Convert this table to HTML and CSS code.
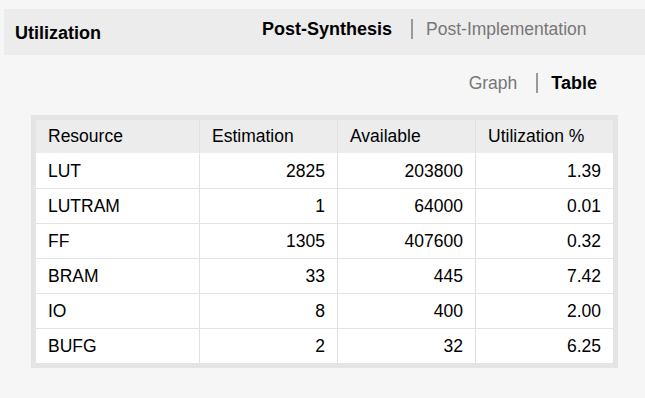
FILE: index.html
```html
<!DOCTYPE html>
<html>
<head>
<meta charset="utf-8">
<link rel="stylesheet" href="styles.css">
</head>
<body>
<div class="panel">
  <div class="header">
    <div class="title">Utilization</div>
    <div class="tabs">
      <span class="tab active">Post-Synthesis</span>
      <span class="sep sep-top"></span>
      <span class="tab">Post-Implementation</span>
    </div>
  </div>
  <div class="content">
    <div class="toggle">
      <span class="tab">Graph</span>
      <span class="sep sep-toggle"></span>
      <span class="tab active">Table</span>
    </div>
    <div class="frame">
      <table class="util">
        <colgroup>
          <col class="c1"><col class="c2"><col class="c3"><col class="c4">
        </colgroup>
        <thead>
          <tr><th>Resource</th><th>Estimation</th><th>Available</th><th>Utilization %</th></tr>
        </thead>
        <tbody>
          <tr><td>LUT</td><td class="num">2825</td><td class="num">203800</td><td class="num">1.39</td></tr>
          <tr><td>LUTRAM</td><td class="num">1</td><td class="num">64000</td><td class="num">0.01</td></tr>
          <tr><td>FF</td><td class="num">1305</td><td class="num">407600</td><td class="num">0.32</td></tr>
          <tr><td>BRAM</td><td class="num">33</td><td class="num">445</td><td class="num">7.42</td></tr>
          <tr><td>IO</td><td class="num">8</td><td class="num">400</td><td class="num">2.00</td></tr>
          <tr><td>BUFG</td><td class="num">2</td><td class="num">32</td><td class="num">6.25</td></tr>
        </tbody>
      </table>
    </div>
  </div>
</div>
</body>
</html>
```
FILE: styles.css
```css
html, body {
  margin: 0;
  padding: 0;
  background: #f6f6f6;
  font-family: "Liberation Sans", Arial, sans-serif;
  font-size: 17.5px;
  color: #000;
}

.panel {
  padding: 9px 0 0 4px;
}

.header {
  background: #ececec;
  height: 46px;
  display: flex;
  align-items: flex-start;
}

.title {
  font-weight: bold;
  font-size: 18px;
  line-height: 20px;
  padding: 14px 0 0 11px;
  width: 247px;
}

.tabs {
  display: flex;
  align-items: center;
  padding-top: 10px;
  line-height: 20px;
}

.tab {
  color: #777;
  line-height: 20px;
}

.tab.active {
  color: #000;
  font-weight: bold;
  font-size: 18px;
}

.sep {
  display: inline-block;
  width: 2px;
  height: 20px;
  background: #999;
}

.sep-top {
  margin: 0 13px 0 19px;
}

.sep-toggle {
  margin: 0 13px 0 19px;
}

.content {
  padding: 0 27px 0 27px;
}

.toggle {
  display: flex;
  justify-content: flex-end;
  align-items: center;
  padding: 18px 21px 0 0;
  height: 20px;
}

.frame {
  margin-top: 22px;
  width: 577px;
  border: 5px solid #e4e4e4;
  margin-bottom: 20px;
}

.util {
  width: 577px;
  border-collapse: separate;
  border-spacing: 0;
  table-layout: fixed;
  background: #fff;
}

.util col.c1 { width: 163px; }
.util col.c2 { width: 138px; }
.util col.c3 { width: 138px; }
.util col.c4 { width: 138px; }

.util th,
.util td {
  box-sizing: border-box;
  padding: 0 12px;
  text-align: left;
  font-weight: normal;
  white-space: nowrap;
}

.util th {
  background: #ececec;
  height: 33px;
}

.util td {
  height: 35px;
  border-top: 1px solid #e4e4e4;
}

.util tbody tr:first-child td {
  border-top-color: #fff;
}

.util th + th,
.util td + td {
  border-left: 1px solid #e0e0e0;
}

.util td.num {
  text-align: right;
}
```
